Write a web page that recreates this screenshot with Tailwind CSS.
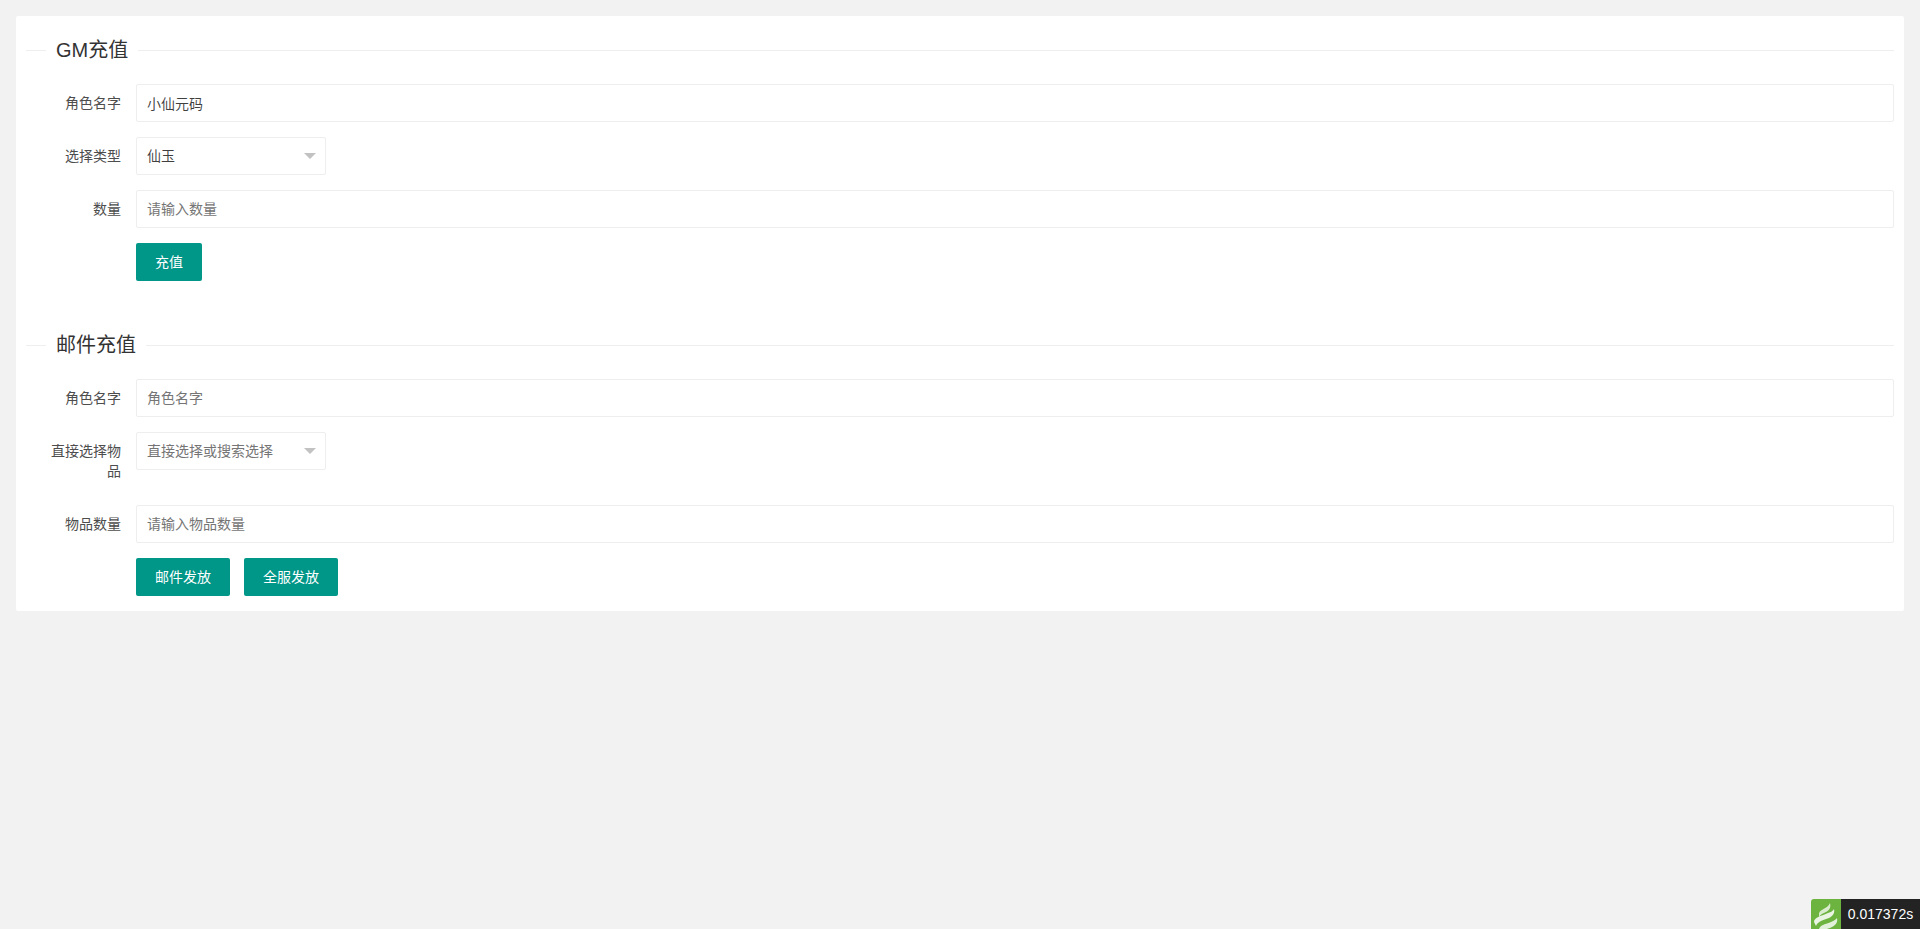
<!DOCTYPE html>
<html lang="zh-CN">
<head>
    <meta charset="UTF-8">
    <meta name="viewport" content="width=device-width, initial-scale=1.0">
    <title>GM充值</title>
    <script src="https://cdn.jsdelivr.net/npm/@tailwindcss/browser@4"></script>
</head>
<body class="min-h-[929px] bg-[#f2f2f2] p-4 text-[14px] leading-[20px] text-[#4d4d4d] font-['Liberation_Sans','Noto_Sans_CJK_SC',sans-serif]">

    <div class="rounded-[2px] bg-white p-[10px] pb-[15px]">

        <!-- GM recharge -->
        <fieldset class="mt-[10px] mb-[50px] border-t border-[#eee] pt-[20px]">
            <legend class="ml-[20px] px-[10px] text-[20px] leading-[28px] font-normal text-[#333]">GM充值</legend>
            <div class="mb-[15px] flex">
                <label class="w-[110px] shrink-0 px-[15px] py-[9px] text-right">角色名字</label>
                <input type="text" value="小仙元码" class="h-[38px] w-full rounded-[2px] border border-[#eee] pl-[10px] text-black/75">
            </div>
            <div class="mb-[15px] flex">
                <label class="w-[110px] shrink-0 px-[15px] py-[9px] text-right">选择类型</label>
                <div class="relative flex h-[38px] w-[190px] items-center rounded-[2px] border border-[#eee] pl-[10px] text-black/75">
                    仙玉
                    <span class="absolute right-[9px] top-[15px] border-x-[6px] border-t-[6px] border-x-transparent border-t-[#c2c2c2]"></span>
                </div>
            </div>
            <div class="mb-[15px] flex">
                <label class="w-[110px] shrink-0 px-[15px] py-[9px] text-right">数量</label>
                <input type="text" placeholder="请输入数量" class="h-[38px] w-full rounded-[2px] border border-[#eee] pl-[10px] placeholder:text-[#757575]">
            </div>
            <div class="ml-[110px] flex">
                <button class="h-[38px] rounded-[2px] bg-[#009688] px-[19px] text-white">充值</button>
            </div>
        </fieldset>

        <!-- Mail recharge -->
        <fieldset class="border-t border-[#eee] pt-[20px]">
            <legend class="ml-[20px] px-[10px] text-[20px] leading-[28px] font-normal text-[#333]">邮件充值</legend>
            <div class="mb-[15px] flex">
                <label class="w-[110px] shrink-0 px-[15px] py-[9px] text-right">角色名字</label>
                <input type="text" placeholder="角色名字" class="h-[38px] w-full rounded-[2px] border border-[#eee] pl-[10px] placeholder:text-[#757575]">
            </div>
            <div class="mb-[15px] flex">
                <label class="w-[110px] shrink-0 px-[15px] py-[9px] text-right">直接选择物品</label>
                <div class="relative flex h-[38px] w-[190px] items-center rounded-[2px] border border-[#eee] pl-[10px] text-[#757575]">
                    直接选择或搜索选择
                    <span class="absolute right-[9px] top-[15px] border-x-[6px] border-t-[6px] border-x-transparent border-t-[#c2c2c2]"></span>
                </div>
            </div>
            <div class="mb-[15px] flex">
                <label class="w-[110px] shrink-0 px-[15px] py-[9px] text-right">物品数量</label>
                <input type="text" placeholder="请输入物品数量" class="h-[38px] w-full rounded-[2px] border border-[#eee] pl-[10px] placeholder:text-[#757575]">
            </div>
            <div class="ml-[110px] flex gap-[14px]">
                <button class="h-[38px] rounded-[2px] bg-[#009688] px-[19px] text-white">邮件发放</button>
                <button class="h-[38px] rounded-[2px] bg-[#009688] px-[19px] text-white">全服发放</button>
            </div>
        </fieldset>
    </div>

    <!-- Page trace badge -->
    <div class="fixed bottom-0 right-0 flex h-[30px] items-stretch">
        <div class="w-[30px] overflow-hidden rounded-tl-[3px] bg-[#6cb33f]">
            <svg viewBox="0 0 30 30" class="h-[30px] w-[30px]">
                <path d="M8 15 C8 11 14 10 17 7 C18 6 18.5 5 19 4 C20 8 19 11 15 13 C12 14.5 9.5 15 8 18 Z" fill="#fff" opacity="0.75"/>
                <path d="M3 23 C3 18 11 17 17 14 C20 13 22 12 23 10 C24 14 22 17 18 19 C12 21.5 7 22 5 27 Z" fill="#fff" opacity="0.85"/>
                <path d="M8 30 C9 26 15 25 20 23 C23 22 25 20 26 19 C27 23 25 26 21 28 C18 29.5 16 30 15 30 Z" fill="#fff" opacity="0.8"/>
            </svg>
        </div>
        <div class="flex w-[79px] items-center justify-center bg-[#232323] text-[14px] text-white">0.017372s</div>
    </div>

</body>
</html>
